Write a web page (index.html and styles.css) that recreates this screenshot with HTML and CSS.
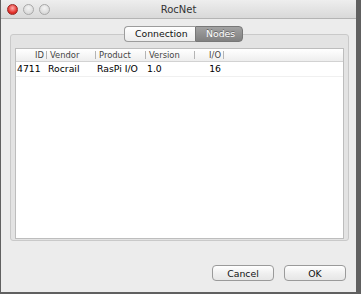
FILE: index.html
```html
<!DOCTYPE html>
<html lang="en">
<head>
  <meta charset="UTF-8" />
  <title>RocNet</title>
  <link rel="stylesheet" href="styles.css">
</head>
<body>
  <div class="window">
    <div class="titlebar">
      <div class="lights">
        <span class="light close"></span>
        <span class="light"></span>
        <span class="light"></span>
      </div>
      <div class="title">RocNet</div>
    </div>

    <div class="content">
      <div class="tabs">
        <span class="tab">Connection</span>
        <span class="tab active">Nodes</span>
      </div>

      <div class="tabbox">
        <div class="table">
          <div class="row head">
            <span class="cell num">ID</span>
            <span class="cell">Vendor</span>
            <span class="cell">Product</span>
            <span class="cell">Version</span>
            <span class="cell num">I/O</span>
            <span class="cell last"></span>
          </div>
          <div class="row">
            <span class="cell">4711</span>
            <span class="cell">Rocrail</span>
            <span class="cell">RasPi I/O</span>
            <span class="cell">1.0</span>
            <span class="cell num">16</span>
            <span class="cell last"></span>
          </div>
        </div>
      </div>

      <div class="buttons">
        <button>Cancel</button>
        <button>OK</button>
      </div>
    </div>
  </div>
</body>
</html>
```

FILE: styles.css
```css
body {
  margin: 0;
  background: #606060;
  font-family: "DejaVu Sans", sans-serif;
  height: 294px;
  overflow: hidden;
}

.window {
  margin-left: 1px;
  width: 355px;
  height: 292px;
  background: #ececec;
  display: flex;
  flex-direction: column;
}

.titlebar {
  height: 18px;
  background: linear-gradient(#eeeeee, #d9d9d9);
  border-bottom: 1px solid #b4b4b4;
  display: flex;
  align-items: center;
  position: relative;
}

.lights {
  display: flex;
  gap: 5px;
  padding-left: 6px;
}

.light {
  width: 9px;
  height: 9px;
  border-radius: 50%;
  background: radial-gradient(circle at 50% 35%, #f4f4f4, #cfcfcf);
  border: 1px solid #a8a8a8;
}

.light.close {
  background: radial-gradient(circle at 50% 35%, #ffb0ae, #e4332e 60%, #b51d18);
  border-color: #9a2a26;
}

.title {
  position: absolute;
  left: 0;
  right: 0;
  text-align: center;
  font-size: 10px;
  color: #333;
}

.content {
  flex: 1;
  display: flex;
  flex-direction: column;
}

.tabs {
  display: flex;
  justify-content: center;
  margin: 7px 0 -8px 10px;
  position: relative;
  z-index: 1;
}

.tab {
  height: 14px;
  line-height: 14px;
  font-size: 9.3px;
  padding: 0 10px;
  border: 1px solid #9c9c9c;
  background: linear-gradient(#ffffff, #ececec);
  color: #111;
}

.tab:first-child {
  width: 50px;
  border-radius: 4px 0 0 4px;
  border-right: none;
}

.tab.active {
  width: 26px;
  border-radius: 0 4px 4px 0;
  background: linear-gradient(#a2a2a2, #808080);
  border-color: #777;
  color: #fff;
  text-shadow: 0 -1px 0 #666;
}

.tabbox {
  margin-left: 9px;
  width: 339px;
  height: 207px;
  border: 1px solid #c9c9c9;
  border-radius: 3px;
  background: #e3e3e3;
  padding: 13px 4px 5px;
  box-sizing: border-box;
}

.table {
  height: 189px;
  background: #fff;
  border: 1px solid #bdbdbd;
}

.row {
  display: grid;
  grid-template-columns: 31px 49px 50px 49px 29px 1fr;
  height: 14px;
  line-height: 14px;
  font-size: 9.3px;
  color: #000;
  border-bottom: 1px solid #f0f0f0;
}

.row.head {
  height: 12px;
  line-height: 12px;
  font-size: 8.4px;
  color: #444;
  background: linear-gradient(#ffffff, #eeeeee);
  border-bottom: 1px solid #d2d2d2;
}

.cell {
  padding-left: 1px;
  white-space: nowrap;
  overflow: hidden;
}

.head .cell {
  padding-left: 3px;
  background: linear-gradient(#b4b4b4, #b4b4b4) right center / 1px 8px no-repeat;
}

.head .cell.last {
  background: none;
}

.cell.num {
  text-align: right;
  padding-right: 3px;
}

.buttons {
  display: flex;
  justify-content: flex-end;
  gap: 10px;
  margin-top: 24px;
  padding-right: 10px;
}

button {
  width: 62px;
  height: 16px;
  padding: 0;
  font-family: "DejaVu Sans", sans-serif;
  font-size: 9.3px;
  color: #111;
  background: linear-gradient(#ffffff, #f0f0f0 50%, #e6e6e6);
  border: 1px solid #9a9a9a;
  border-radius: 4px;
}
```
